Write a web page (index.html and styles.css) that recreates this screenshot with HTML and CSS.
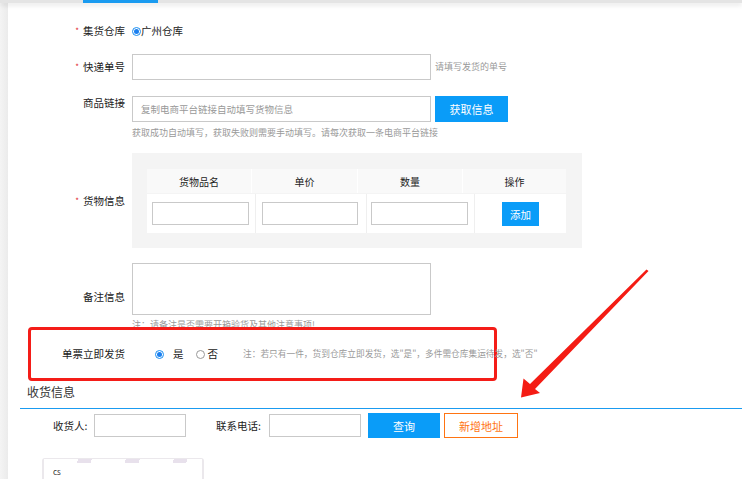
FILE: index.html
```html
<!DOCTYPE html>
<html lang="zh-CN">
<head>
<meta charset="utf-8">
<title>发货</title>
<link rel="stylesheet" href="styles.css">
</head>
<body>
<div class="topbar"><div class="tab"></div></div>
<div class="layout">
  <div class="strip"></div>
  <div class="main">
    <div class="row row1">
      <div class="label"><span class="req">*</span>集货仓库</div>
      <div class="radio-item"><span class="radio on"></span><span class="rtext">广州仓库</span></div>
    </div>
    <div class="row row2">
      <div class="label"><span class="req">*</span>快递单号</div>
      <div class="input wide"></div>
      <span class="hint side">请填写发货的单号</span>
    </div>
    <div class="row row3">
      <div class="label top">商品链接</div>
      <div class="col">
        <div class="inline">
          <div class="input wide ph">复制电商平台链接自动填写货物信息</div>
          <div class="btn blue fetch">获取信息</div>
        </div>
        <div class="hint below">获取成功自动填写，获取失败则需要手动填写。请每次获取一条电商平台链接</div>
      </div>
    </div>
    <div class="row row4">
      <div class="label"><span class="req">*</span>货物信息</div>
      <div class="goods">
        <div class="thead">
          <div class="th">货物品名</div>
          <div class="th">单价</div>
          <div class="th">数量</div>
          <div class="th">操作</div>
        </div>
        <div class="tbody">
          <div class="td"><div class="input cell"></div></div>
          <div class="td"><div class="input cell"></div></div>
          <div class="td"><div class="input cell"></div></div>
          <div class="td center"><div class="btn blue add">添加</div></div>
        </div>
      </div>
    </div>
    <div class="row row5">
      <div class="label">备注信息</div>
      <div class="col">
        <div class="input wide area"></div>
        <div class="hint note">注：请备注是否需要开箱验货及其他注意事项!</div>
      </div>
    </div>
    <div class="redbox">
      <div class="label inbox">单票立即发货</div>
      <div class="radio-item yes"><span class="radio on"></span><span class="rtext">是</span></div>
      <div class="radio-item no"><span class="radio"></span><span class="rtext">否</span></div>
      <span class="hint tip">注：若只有一件，货到仓库立即发货，选"是"，多件需仓库集运待发，选"否"</span>
    </div>
    <div class="section">收货信息</div>
    <div class="search">
      <span class="slabel l1">收货人:</span>
      <div class="input small"></div>
      <span class="slabel l2">联系电话:</span>
      <div class="input small"></div>
      <div class="btn blue query">查询</div>
      <div class="btn orange newaddr">新增地址</div>
    </div>
    <div class="card">
      <div class="stripes"></div>
      <div class="cname">cs</div>
    </div>
  </div>
</div>
<svg class="arrow" width="742" height="479" viewBox="0 0 742 479">
  <polygon points="646.5,269.5 648.5,271 535,389 540,393 521,397.5 523.5,378.5 530,384" fill="#f41c14"/>
</svg>
</body>
</html>
```
FILE: styles.css
```css
* { box-sizing: border-box; }
html, body { margin: 0; padding: 0; }
body {
  width: 742px;
  height: 479px;
  overflow: hidden;
  background: #fff;
  font-family: "Noto Sans CJK SC", "Noto Sans", sans-serif;
  color: #222;
  position: relative;
}
.topbar {
  height: 3px;
  background: #e4e4e4;
  box-shadow: 0 2px 5px rgba(0,0,0,0.13);
  position: relative;
  z-index: 2;
}
.tab {
  margin-left: 83px;
  width: 75px;
  height: 3px;
  background: #1a9bf0;
}
.layout { display: flex; height: 476px; }
.strip {
  width: 8px;
  flex-shrink: 0;
  background: linear-gradient(to right, #f4f4f4, #ebebeb);
}
.main { flex: 1; padding-top: 19px; }
.row { display: flex; align-items: center; }
.label {
  width: 117px;
  margin-right: 7px;
  flex-shrink: 0;
  text-align: right;
  font-size: 10.5px;
  line-height: 18px;
  color: #222;
}
.label.top { line-height: 14px; }
.req { color: #e0262b; font-size: 8px; margin-right: 4px; vertical-align: 1px; }
.row2 { margin-top: 14px; }
.row3 { margin-top: 16px; align-items: flex-start; }
.row4 { margin-top: 14px; }
.row5 { margin-top: 15px; }
.radio-item { display: flex; align-items: center; font-size: 10.5px; line-height: 18px; color: #222; }
.radio {
  width: 9px; height: 9px;
  border: 1px solid #999;
  border-radius: 50%;
  background: #fff;
  display: inline-flex;
  align-items: center;
  justify-content: center;
}
.radio.on { border-color: #1a8ef0; }
.radio.on::after {
  content: "";
  width: 5px; height: 5px;
  border-radius: 50%;
  background: #1a7ff0;
}
.input {
  border: 1px solid #c9c9c9;
  background: #fff;
  height: 26px;
}
.input.wide { width: 299px; }
.input.ph {
  font-size: 9.5px;
  color: #999;
  line-height: 24px;
  padding-left: 8px;
}
.input.area { height: 52px; }
.hint { font-size: 9px; color: #999; line-height: 12px; white-space: nowrap; }
.hint.side { margin-left: 4px; }
.hint.below { margin-top: 5px; }
.hint.note { margin-top: 4px; }
.col { display: flex; flex-direction: column; }
.inline { display: flex; }
.btn {
  height: 26px;
  display: flex;
  align-items: center;
  justify-content: center;
  font-size: 11px;
}
.btn.blue { background: #0a9cf8; color: #fff; }
.fetch { width: 73px; margin-left: 4px; }
.goods {
  width: 450px;
  height: 95px;
  background: #f4f4f4;
  padding: 16px 16px 15px 15px;
}
.thead {
  display: grid;
  grid-template-columns: 104px 105px 104px 1fr;
  gap: 1px;
  background: #fff;
  height: 24px;
}
.th {
  background: #f9f9f9;
  font-size: 10px;
  display: flex;
  align-items: center;
  justify-content: center;
}
.tbody {
  display: grid;
  grid-template-columns: 108px 110px 107px 1fr;
  gap: 1px;
  background: #efefef;
  margin-top: 1px;
  height: 39px;
}
.td { background: #fff; padding: 8px 0 0 5px; }
.td:nth-child(2) { padding-left: 6px; }
.td:nth-child(3) { padding-left: 4px; }
.td.center { padding: 8px 0 0 0; display: flex; justify-content: center; align-items: flex-start; }
.input.cell { width: 97px; height: 23px; }
.td:nth-child(2) .input.cell { width: 96px; }
.btn.add { width: 37px; height: 24px; font-size: 10.5px; }
.redbox {
  position: relative;
  z-index: 1;
  margin-top: -4px;
  margin-left: 20px;
  width: 469px;
  height: 54px;
  border: 3px solid #f41d18;
  border-radius: 4px;
  display: flex;
  align-items: center;
}
.label.inbox { width: 94px; margin-right: 0; }
.yes { margin-left: 30px; }
.yes .rtext { margin-left: 9px; }
.no { margin-left: 12px; }
.no .rtext { margin-left: 3px; }
.hint.tip { margin-left: 25px; font-size: 8.7px; }
.section {
  margin-left: 12px;
  border-bottom: 1px solid #1a9bf0;
  padding-left: 7px;
  line-height: 22px;
  padding-bottom: 5px;
  font-size: 12px;
  color: #333;
}
.search { display: flex; align-items: center; margin-top: 4px; height: 25px; }
.slabel { font-size: 10.5px; color: #222; white-space: nowrap; }
.l1 { margin-left: 45px; width: 41px; }
.l2 { margin-left: 30px; width: 53px; }
.input.small { width: 92px; height: 23px; }
.btn.query { width: 72px; height: 25px; margin-left: 7px; }
.btn.orange {
  width: 74px; height: 25px; margin-left: 4px;
  border: 1px solid #ff7412;
  color: #ff7412;
  background: #fff;
}
.card {
  margin-top: 20px;
  margin-left: 34px;
  width: 162px;
  height: 40px;
  border: 1px solid #ebe8ec;
  border-left-width: 2px;
  border-right-width: 2px;
  border-radius: 3px;
  background: #fff;
}
.stripes {
  height: 4px;
  background: repeating-linear-gradient(110deg, #fff 0 32px, #e8e1ec 32px 45px);
}
.cname { font-size: 8px; color: #333; padding-left: 9px; margin-top: 4px; line-height: 10px; }
.arrow { position: absolute; left: 0; top: 0; pointer-events: none; z-index: 5; }
```
